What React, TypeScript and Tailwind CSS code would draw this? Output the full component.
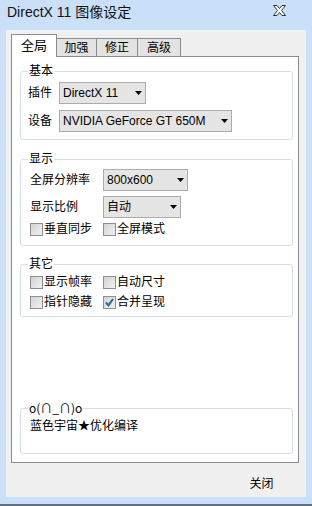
import type { ReactNode } from "react";

const FONT = "font-['Liberation_Sans','Noto_Sans_CJK_SC',sans-serif]";

function Combo({ value, width }: { value: string; width: string }) {
  return (
    <div
      className={`${width} h-[22px] flex items-center justify-between border border-[#acacac] bg-[#e5e5e5] pl-[3px] pr-[3px] text-[12px] leading-[14px] text-black`}
    >
      <span>{value}</span>
      <svg width="7" height="4" viewBox="0 0 7 4">
        <path d="M0 0h7L3.5 4z" fill="#000" />
      </svg>
    </div>
  );
}

function Check({ label, checked = false }: { label: string; checked?: boolean }) {
  return (
    <div className="flex items-center h-[14px] w-[73px]">
      <div className="w-[13px] h-[13px] border border-[#8f8f8f] bg-gradient-to-br from-[#d4d4d4] to-[#f0f0f0] flex items-center justify-center">
        {checked && (
          <svg width="9" height="9" viewBox="0 0 9 9">
            <path d="M1 4.5l2.5 2.8L8 1" fill="none" stroke="#1f6b9c" strokeWidth="2" />
          </svg>
        )}
      </div>
      <span className="ml-px text-[12px] leading-[14px] text-black">{label}</span>
    </div>
  );
}

function Group({ title, className, children }: { title: ReactNode; className: string; children: ReactNode }) {
  return (
    <div className={`relative border border-[#d5dfe5] rounded-[3px] ${className}`}>
      <span className="absolute left-[7px] top-[-8px] bg-white px-px text-[12px] leading-[14px] text-black">
        {title}
      </span>
      {children}
    </div>
  );
}

export default function App() {
  return (
    <div className={`w-[312px] h-[506px] bg-[#c9e0f8] flex flex-col border-b-2 border-[#62707e] ${FONT}`}>
      <div className="h-[30px] flex items-start justify-between pl-[7px] pr-[26px] pt-[4px]">
        <span className="text-[14px] leading-[17px] text-[#111]">DirectX 11 图像设定</span>
        <svg width="13" height="11" viewBox="0 0 13 11" className="mt-[1px]">
          <path
            d="M0.5 0.5h3.5l2.5 3 2.5-3h3.5l-4 5 4 5h-3.5l-2.5-3-2.5 3h-3.5l4-5z"
            fill="#fff"
            stroke="#333"
            strokeWidth="1"
          />
        </svg>
      </div>

      <div className="mx-[6px] h-[467px] bg-[#f0f0f0] flex flex-col pl-[5px] pr-[7px] pt-[4px]">
        <div className="flex items-end h-[22px] text-[12px] leading-[14px] text-black">
          <div className="relative z-10 w-[46px] h-[23px] -mb-px border border-b-0 border-[#898c95] bg-white flex items-center justify-center text-[13px]">
            全局
          </div>
          <div className="w-[40px] h-[18px] border-t border-r border-[#898c95] bg-[#e3e3e3] flex items-center justify-center pt-px">
            加强
          </div>
          <div className="w-[41px] h-[18px] border-t border-r border-[#898c95] bg-[#e3e3e3] flex items-center justify-center pt-px">
            修正
          </div>
          <div className="w-[43px] h-[18px] border-t border-r border-[#898c95] bg-[#e3e3e3] flex items-center justify-center pt-px">
            高级
          </div>
        </div>

        <div className="h-[407px] border border-[#898c95] bg-white flex flex-col pl-[8px] pr-[5px] pt-[14px] pb-[8px] text-[12px] leading-[14px] text-black">
          <Group title="基本" className="pt-[10px] pb-[7px] pl-[7px] flex flex-col gap-[6px]">
            <div className="flex items-center">
              <span className="w-[31px]">插件</span>
              <Combo value="DirectX 11" width="w-[87px]" />
            </div>
            <div className="flex items-center">
              <span className="w-[31px]">设备</span>
              <Combo value="NVIDIA GeForce GT 650M" width="w-[173px]" />
            </div>
          </Group>

          <Group title="显示" className="mt-[19px] pt-[9px] pb-[9px] pl-[9px] flex flex-col">
            <div className="flex items-center">
              <span className="w-[73px]">全屏分辨率</span>
              <Combo value="800x600" width="w-[85px]" />
            </div>
            <div className="flex items-center mt-[5px]">
              <span className="w-[73px]">显示比例</span>
              <Combo value="自动" width="w-[78px]" />
            </div>
            <div className="flex mt-[4px]">
              <Check label="垂直同步" />
              <Check label="全屏模式" />
            </div>
          </Group>

          <Group title="其它" className="mt-[18px] pt-[10px] pb-[7px] pl-[9px] flex flex-col gap-[6px]">
            <div className="flex">
              <Check label="显示帧率" />
              <Check label="自动尺寸" />
            </div>
            <div className="flex">
              <Check label="指针隐藏" />
              <Check label="合并呈现" checked />
            </div>
          </Group>

          <Group
            title={<span className="font-['Noto_Sans_CJK_SC',sans-serif]">o(∩_∩)o</span>}
            className="mt-auto pt-[10px] pb-[20px] pl-[9px]"
          >
            <div>蓝色宇宙★优化编译</div>
          </Group>
        </div>

        <div className="flex justify-end pt-[9px]">
          <button className="w-[75px] h-[23px] text-[12px] leading-[14px] text-black">关闭</button>
        </div>
      </div>
    </div>
  );
}
